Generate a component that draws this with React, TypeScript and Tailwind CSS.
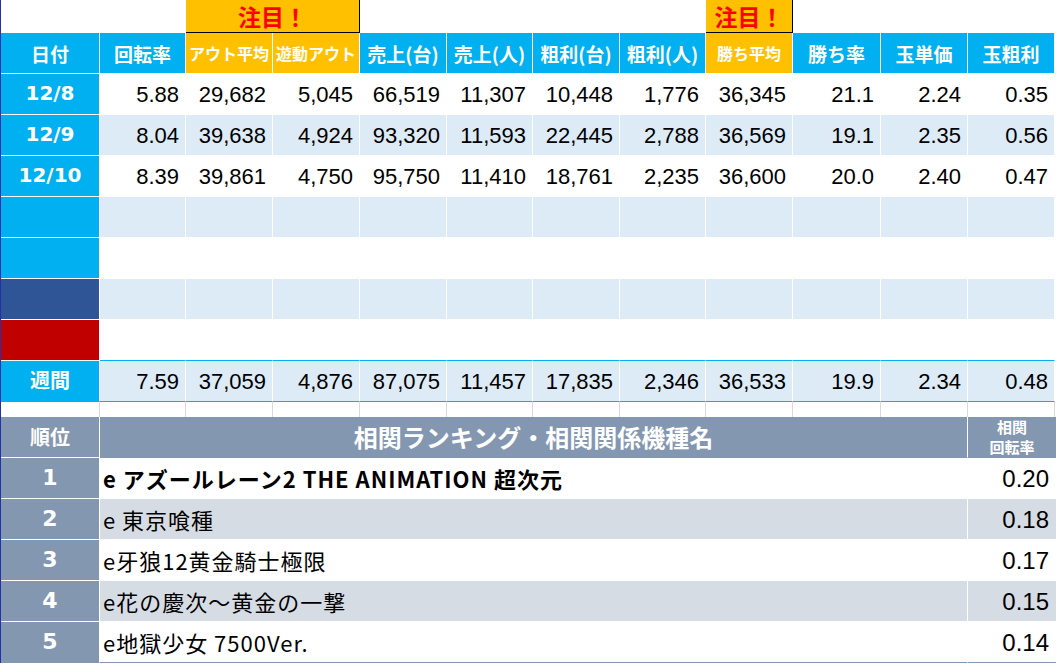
import React from 'react';

const JP = "font-['Noto_Sans_CJK_JP','Liberation_Sans',sans-serif]";
const NUM = "font-['Liberation_Sans','Noto_Sans_CJK_JP',sans-serif]";

const headers = [
  { label: '日付', orange: false },
  { label: '回転率', orange: false },
  { label: 'アウト平均', orange: true },
  { label: '遊動アウト', orange: true },
  { label: '売上(台)', orange: false },
  { label: '売上(人)', orange: false },
  { label: '粗利(台)', orange: false },
  { label: '粗利(人)', orange: false },
  { label: '勝ち平均', orange: true },
  { label: '勝ち率', orange: false },
  { label: '玉単価', orange: false },
  { label: '玉粗利', orange: false },
];

type Row = { label: string; labelBg: string; values: string[]; shaded: boolean; cyanBottom?: boolean; cyanBoth?: boolean };

const rows: Row[] = [
  { label: '12/8', labelBg: 'bg-[#00B0F0]', shaded: false, values: ['5.88', '29,682', '5,045', '66,519', '11,307', '10,448', '1,776', '36,345', '21.1', '2.24', '0.35'] },
  { label: '12/9', labelBg: 'bg-[#00B0F0]', shaded: true, values: ['8.04', '39,638', '4,924', '93,320', '11,593', '22,445', '2,788', '36,569', '19.1', '2.35', '0.56'] },
  { label: '12/10', labelBg: 'bg-[#00B0F0]', shaded: false, values: ['8.39', '39,861', '4,750', '95,750', '11,410', '18,761', '2,235', '36,600', '20.0', '2.40', '0.47'] },
  { label: '', labelBg: 'bg-[#00B0F0]', shaded: true, values: Array(11).fill('') },
  { label: '', labelBg: 'bg-[#00B0F0]', shaded: false, values: Array(11).fill('') },
  { label: '', labelBg: 'bg-[#2F5597]', shaded: true, values: Array(11).fill('') },
  { label: '', labelBg: 'bg-[#C00000]', shaded: false, values: Array(11).fill(''), cyanBottom: true },
  { label: '週間', labelBg: 'bg-[#00B0F0]', shaded: true, values: ['7.59', '37,059', '4,876', '87,075', '11,457', '17,835', '2,346', '36,533', '19.9', '2.34', '0.48'], cyanBoth: true },
];

const ranking = [
  { rank: '1', name: 'e アズールレーン2 THE ANIMATION 超次元', value: '0.20', bold: true },
  { rank: '2', name: 'e 東京喰種', value: '0.18' },
  { rank: '3', name: 'e牙狼12黄金騎士極限', value: '0.17' },
  { rank: '4', name: 'e花の慶次～黄金の一撃', value: '0.15' },
  { rank: '5', name: 'e地獄少女 7500Ver.', value: '0.14' },
];

const GRID = 'grid grid-cols-[99px_86px_87px_87px_87px_86px_87px_86px_87px_88px_87px_87px]';

function Attention() {
  return (
    <div className={`${JP} flex h-full items-center justify-center bg-[#FFC000] border-r border-b border-black text-[23px] font-bold leading-none text-[#FF0000]`}>
      注目！
    </div>
  );
}

export default function App() {
  return (
    <div className="w-[1057px] h-[665px] bg-white overflow-hidden">
      <div className="w-[1056px] border-l border-[#2233AA]">
        {/* top attention row */}
        <div className={`${GRID} h-[33px]`}>
          <div className="col-span-2" />
          <div className="col-span-2">
            <Attention />
          </div>
          <div className="col-span-4" />
          <div>
            <Attention />
          </div>
          <div className="col-span-3" />
        </div>

        {/* header row */}
        <div className={`${GRID} h-[41px]`}>
          {headers.map((h) => (
            <div
              key={h.label}
              className={`${JP} flex items-center justify-center border-r border-b border-white font-bold text-white leading-none whitespace-nowrap ${
                h.orange ? 'bg-[#FFC000] text-[16px]' : 'bg-[#00B0F0] text-[19px]'
              }`}
            >
              {h.label}
            </div>
          ))}
        </div>

        {/* data rows */}
        {rows.map((r, i) => {
          const bg = r.shaded ? 'bg-[#DDEBF7]' : 'bg-white';
          const bottom = r.cyanBottom || r.cyanBoth ? 'border-b-[#00B0F0]' : 'border-b-white';
          return (
            <div key={i} className={`${GRID} h-[41px]`}>
              <div
                className={`${r.labelBg} ${r.label === '週間' ? `${JP} text-[20px]` : "font-['DejaVu_Sans',sans-serif] text-[20px]"} flex items-center justify-center pb-[3px] border-r border-b border-r-white ${r.cyanBoth ? 'border-b-[#00B0F0]' : 'border-b-white'} font-bold text-white leading-none`}
              >
                {r.label}
              </div>
              {r.values.map((v, j) => (
                <div
                  key={j}
                  className={`${bg} ${NUM} flex items-center justify-end pr-[6px] pt-[1px] border-r border-b border-r-white ${bottom} text-[22px] text-black leading-none`}
                >
                  {v}
                </div>
              ))}
            </div>
          );
        })}

        {/* spacer row */}
        <div className={`${GRID} h-[15px]`}>
          {headers.map((h) => (
            <div key={h.label} className="border-r border-[#D9D9D9]" />
          ))}
        </div>

        {/* ranking */}
        <div className="grid grid-cols-[99px_868px_88px]">
          <div className={`${JP} flex h-[41px] items-center justify-center bg-[#8497B0] border-r border-b border-white text-[20px] font-bold text-white leading-none`}>
            順位
          </div>
          <div className={`${JP} flex h-[41px] items-center justify-center bg-[#8497B0] border-r border-b border-r-white border-b-[#8497B0] text-[24px] font-bold text-white leading-none`}>
            相関ランキング・相関関係機種名
          </div>
          <div className={`${JP} h-[41px] overflow-hidden bg-[#8497B0] border-b border-[#8497B0] text-center text-[15px] font-bold text-white leading-[20px]`}>
            相関
            <br />
            回転率
          </div>

          {ranking.map((r, i) => {
            const bg = i % 2 === 1 ? 'bg-[#D6DCE4]' : 'bg-white';
            const last = i === ranking.length - 1;
            return (
              <React.Fragment key={r.rank}>
                <div className={`font-['DejaVu_Sans',sans-serif] flex h-[41px] items-center justify-center bg-[#8497B0] border-r border-b border-r-white ${last ? 'border-b-[#8497B0]' : 'border-b-white'} text-[22px] font-bold text-white leading-none`}>
                  {r.rank}
                </div>
                <div className={`${JP} ${bg} flex h-[41px] items-center pl-[3px] border-r border-b border-r-white ${last ? 'border-b-[#8497B0]' : 'border-b-white'} text-[22px] tracking-[1px] text-black leading-none whitespace-nowrap ${r.bold ? 'font-bold' : ''}`}>
                  {r.name}
                </div>
                <div className={`${NUM} ${bg} flex h-[41px] items-center justify-end pr-[7px] pt-[2px] border-b ${last ? 'border-b-[#8497B0]' : 'border-b-white'} text-[24px] text-black leading-none`}>
                  {r.value}
                </div>
              </React.Fragment>
            );
          })}
        </div>
      </div>
    </div>
  );
}
